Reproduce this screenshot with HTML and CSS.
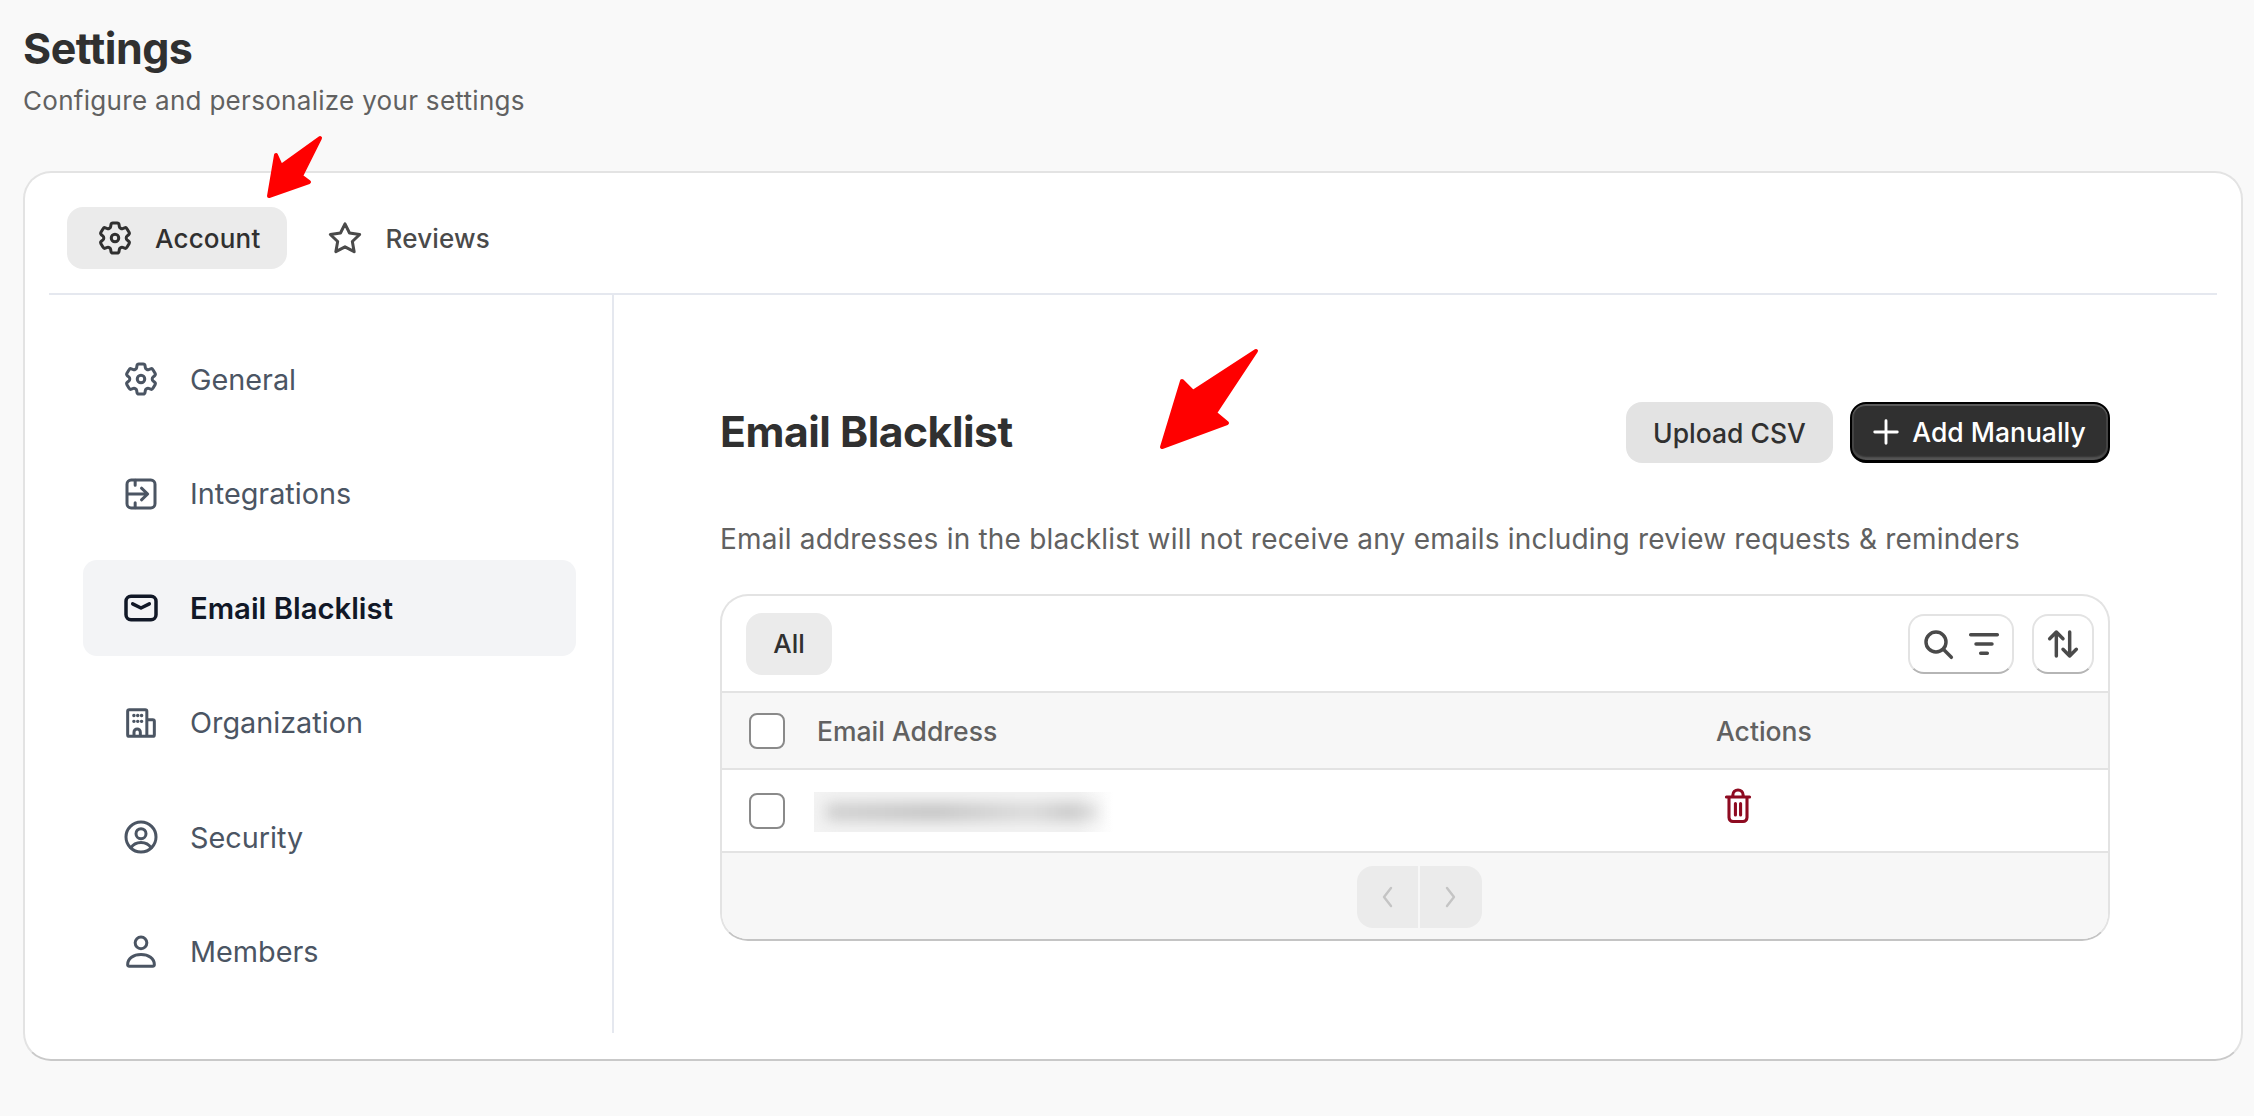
FILE: index.html
```html
<!DOCTYPE html>
<html lang="en">
<head>
    <meta charset="UTF-8">
    <title>Settings</title>
    <link rel="stylesheet" href="styles.css">
</head>
<body>

<svg class="arrow arrow_tab" viewBox="0 0 60 68"><path d="M55 4 L16 32 L11 21 L4 62 L44 48 L36 42 Z"/></svg>
<svg class="arrow arrow_head" viewBox="0 0 104 106"><path d="M98 6 L35 47 L24 36 L4 102 L69 78 L57 68 Z"/></svg>

<div class="page_head">
    <h1 class="page_title">Settings</h1>
    <p class="page_sub">Configure and personalize your settings</p>
</div>

<div class="card">
    <div class="tabs">
        <div class="tab tab_on">
            <svg class="icon" viewBox="0 0 24 24"><path d="M9.594 3.94c.09-.542.56-.94 1.11-.94h2.593c.55 0 1.02.398 1.11.94l.213 1.281c.063.374.313.686.645.87.074.04.147.083.22.127.325.196.72.257 1.075.124l1.217-.456a1.125 1.125 0 0 1 1.37.49l1.296 2.247a1.125 1.125 0 0 1-.26 1.431l-1.003.827c-.293.241-.438.613-.43.992a7.723 7.723 0 0 1 0 .255c-.008.378.137.75.43.991l1.004.827c.424.35.534.955.26 1.43l-1.298 2.247a1.125 1.125 0 0 1-1.369.491l-1.217-.456c-.355-.133-.75-.072-1.076.124a6.47 6.47 0 0 1-.22.128c-.331.183-.581.495-.644.869l-.213 1.281c-.09.543-.56.94-1.11.94h-2.594c-.55 0-1.019-.398-1.11-.94l-.213-1.281c-.062-.374-.312-.686-.644-.87a6.52 6.52 0 0 1-.22-.127c-.325-.196-.72-.257-1.076-.124l-1.217.456a1.125 1.125 0 0 1-1.369-.49l-1.297-2.247a1.125 1.125 0 0 1 .26-1.431l1.004-.827c.292-.24.437-.613.43-.991a6.932 6.932 0 0 1 0-.255c.007-.38-.138-.751-.43-.992l-1.004-.827a1.125 1.125 0 0 1-.26-1.43l1.297-2.247a1.125 1.125 0 0 1 1.37-.491l1.216.456c.356.133.751.072 1.076-.124.072-.044.146-.086.22-.128.332-.183.582-.495.644-.869l.214-1.28Z"/><circle cx="12" cy="12" r="2.25"/></svg>
            <span>Account</span>
        </div>
        <div class="tab">
            <svg class="icon" viewBox="0 0 24 24"><path d="M12 3.500 L14.700 9 L20.800 9.900 L16.400 14.100 L17.500 20.200 L12 17.300 L6.500 20.200 L7.600 14.100 L3.200 9.900 L9.300 9 Z"/></svg>
            <span>Reviews</span>
        </div>
    </div>

    <div class="content">
        <div class="side">
            <div class="nav_item">
                <svg class="icon" viewBox="0 0 24 24"><path d="M9.594 3.94c.09-.542.56-.94 1.11-.94h2.593c.55 0 1.02.398 1.11.94l.213 1.281c.063.374.313.686.645.87.074.04.147.083.22.127.325.196.72.257 1.075.124l1.217-.456a1.125 1.125 0 0 1 1.37.49l1.296 2.247a1.125 1.125 0 0 1-.26 1.431l-1.003.827c-.293.241-.438.613-.43.992a7.723 7.723 0 0 1 0 .255c-.008.378.137.75.43.991l1.004.827c.424.35.534.955.26 1.43l-1.298 2.247a1.125 1.125 0 0 1-1.369.491l-1.217-.456c-.355-.133-.75-.072-1.076.124a6.47 6.47 0 0 1-.22.128c-.331.183-.581.495-.644.869l-.213 1.281c-.09.543-.56.94-1.11.94h-2.594c-.55 0-1.019-.398-1.11-.94l-.213-1.281c-.062-.374-.312-.686-.644-.87a6.52 6.52 0 0 1-.22-.127c-.325-.196-.72-.257-1.076-.124l-1.217.456a1.125 1.125 0 0 1-1.369-.49l-1.297-2.247a1.125 1.125 0 0 1 .26-1.431l1.004-.827c.292-.24.437-.613.43-.991a6.932 6.932 0 0 1 0-.255c.007-.38-.138-.751-.43-.992l-1.004-.827a1.125 1.125 0 0 1-.26-1.43l1.297-2.247a1.125 1.125 0 0 1 1.37-.491l1.216.456c.356.133.751.072 1.076-.124.072-.044.146-.086.22-.128.332-.183.582-.495.644-.869l.214-1.28Z"/><circle cx="12" cy="12" r="2.25"/></svg>
                <span>General</span>
            </div>
            <div class="nav_item">
                <svg class="icon" viewBox="0 0 24 24"><rect x="3.600" y="3.600" width="16.800" height="16.800" rx="2.500"/><path d="M8.500 3.800v3M8.500 17.200v3M4 12h11.500M12.300 8.500 16 12l-3.700 3.500"/></svg>
                <span>Integrations</span>
            </div>
            <div class="nav_item nav_on">
                <svg class="icon" viewBox="0 0 24 24"><rect x="3" y="5" width="18" height="14" rx="3"/><path d="M7 9.500 12 12l5-2.500"/></svg>
                <span>Email Blacklist</span>
            </div>
            <div class="nav_item">
                <svg class="icon" viewBox="0 0 24 24"><path d="M15.500 20H5a1 1 0 0 1-1-1V5a1 1 0 0 1 1-1h9.500a1 1 0 0 1 1 1v15h3.500a1 1 0 0 0 1-1v-8a1 1 0 0 0-1-1h-3.500M7.800 20v-2.500a1.900 1.900 0 0 1 3.800 0V20"/><path class="dots" d="M7.700 7.500h.1M10 7.500h.1M12.300 7.500h.1M7.700 11h.1M10 11h.1M12.300 11h.1"/></svg>
                <span>Organization</span>
            </div>
            <div class="nav_item">
                <svg class="icon" viewBox="0 0 24 24"><circle cx="12" cy="12" r="9"/><circle cx="12" cy="10" r="3"/><path d="M6 18.500c1.300-2.200 3.400-3.200 6-3.200s4.700 1 6 3.200"/></svg>
                <span>Security</span>
            </div>
            <div class="nav_item">
                <svg class="icon" viewBox="0 0 24 24"><circle cx="12" cy="6.500" r="3.500"/><path d="M5 20.500a1 1 0 0 1-1-1c0-3.600 3.400-6 8-6s8 2.400 8 6a1 1 0 0 1-1 1Z"/></svg>
                <span>Members</span>
            </div>
        </div>

        <div class="main">
            <div class="main_head">
                <h2 class="main_title">Email Blacklist</h2>
                <div class="head_btns">
                    <div class="btn btn_grey">Upload CSV</div>
                    <div class="btn btn_dark">
                        <svg class="icon_plus" viewBox="0 0 24 24"><path d="M12 3v18M3 12h18"/></svg>
                        <span>Add Manually</span>
                    </div>
                </div>
            </div>

            <p class="main_desc">Email addresses in the blacklist will not receive any emails including review requests &amp; reminders</p>

            <div class="tbl">
                <div class="tbl_top">
                    <div class="pill">All</div>
                    <div class="tbl_tools">
                        <div class="tool tool_wide">
                            <svg class="tool_icon" viewBox="0 0 24 24"><circle cx="10.500" cy="10.500" r="7.500"/><path d="m16 16 6 6"/></svg>
                            <svg class="tool_icon" viewBox="0 0 24 24"><path d="M2 5h20M6 12h12M9.500 19h5"/></svg>
                        </div>
                        <div class="tool">
                            <svg class="tool_icon" viewBox="0 0 24 24"><path d="M7 21V3M2 8l5-5 5 5M17 3v18M12 16l5 5 5-5"/></svg>
                        </div>
                    </div>
                </div>

                <div class="tbl_row tbl_hd">
                    <div class="check"></div>
                    <div>Email Address</div>
                    <div>Actions</div>
                </div>
                <div class="tbl_row tbl_bd">
                    <div class="check"></div>
                    <div class="smudge"><div class="smudge_bar"></div></div>
                    <svg class="trash" viewBox="0 0 24 28"><path d="M3 7h18M8 7V5.500a4 4 0 0 1 8 0V7M5 7v16a3 3 0 0 0 3 3h8a3 3 0 0 0 3-3V7M10 12v9M14 12v9"/></svg>
                </div>

                <div class="tbl_foot">
                    <div class="pager">
                        <div class="pager_btn"><svg class="chev" viewBox="0 0 12 24"><path d="M10 3 3 12l7 9"/></svg></div>
                        <div class="pager_btn"><svg class="chev" viewBox="0 0 12 24"><path d="m2 3 7 9-7 9"/></svg></div>
                    </div>
                </div>
            </div>
        </div>
    </div>
</div>

</body>
</html>
```

FILE: styles.css
```css
* { box-sizing: border-box; }

body {
    position: relative;
    margin: 0;
    height: 1116px;
    padding: 0 11px 0 23px;
    overflow: hidden;
    background: #f9f9f9;
    color: #303030;
    font-family: Inter, "Noto Sans", sans-serif;
}

h1, h2, p { margin: 0; }

/* red arrows drawn on top of the screenshot */
.arrow {
    position: absolute;
    z-index: 2;
    fill: #ff0000;
    stroke: #ff0000;
    stroke-width: 4;
    stroke-linejoin: round;
}
.arrow_tab { left: 265px; top: 134px; width: 60px; height: 68px; }
.arrow_head { left: 1158px; top: 345px; width: 104px; height: 106px; }

.page_head { height: 171px; padding-top: 23px; }
.page_title { font-size: 43px; line-height: 50px; font-weight: 700; letter-spacing: -0.5px; }
.page_sub { margin-top: 12px; font-size: 26px; line-height: 32px; color: #616161; letter-spacing: 0.3px; }

.card {
    height: 890px;
    padding: 0 24px;
    background: #fff;
    border: 2px solid #e3e3e3;
    border-bottom-color: #c9c9c9;
    border-radius: 28px;
}

/* tabs */
.tabs {
    display: flex;
    gap: 10px;
    height: 122px;
    padding: 34px 0 24px 18px;
    border-bottom: 2px solid #e5e8ef;
}
.tab {
    display: flex;
    align-items: center;
    gap: 20px;
    height: 62px;
    padding: 0 27px 0 28px;
    border-radius: 16px;
    font-size: 26px;
    font-weight: 500;
    letter-spacing: 0.2px;
    color: #4a4a4a;
}
.tab_on { background: #ebebeb; color: #303030; }
.icon {
    flex: none;
    width: 40px;
    height: 40px;
    fill: none;
    stroke: currentColor;
    stroke-width: 1.800;
    stroke-linecap: round;
    stroke-linejoin: round;
}

.content { display: flex; height: 740px; }

/* left menu */
.side {
    flex: none;
    display: flex;
    flex-direction: column;
    gap: 18.500px;
    width: 565px;
    height: 738px;
    padding: 36px 36px 0 34px;
    border-right: 2px solid #e5e8ef;
}
.nav_item {
    flex: none;
    display: flex;
    align-items: center;
    gap: 29px;
    height: 96px;
    padding-left: 38px;
    border-radius: 14px;
    font-size: 28.800px;
    color: #4b5563;
}
.nav_on { background: #f3f4f6; color: #111827; font-size: 29.300px; font-weight: 600; }
.nav_on .icon { stroke-width: 2.100; }
.dots { stroke-width: 2; }

/* right side */
.main { flex: 1; padding: 107px 107px 0 106px; }
.main_head { display: flex; align-items: center; justify-content: space-between; height: 61px; }
.main_title { padding-bottom: 2px; font-size: 42.700px; font-weight: 700; letter-spacing: -0.500px; }
.head_btns { display: flex; gap: 17px; }

.btn {
    display: flex;
    align-items: center;
    justify-content: center;
    height: 61px;
    border-radius: 16px;
    font-size: 26.500px;
    font-weight: 500;
}
.btn_grey { width: 207px; background: #e3e3e3; }
.btn_dark {
    gap: 11px;
    width: 260px;
    padding-right: 3px;
    background: #303030;
    color: #fff;
    border: 2px solid #000;
    border-bottom-width: 3px;
    box-shadow: inset 0 2px 0 #5a5a5a, inset 2px 0 0 #444, inset -2px 0 0 #444, inset 0 -3px 2px #555;
}
.icon_plus { width: 30px; height: 30px; fill: none; stroke: #fff; stroke-width: 2.300; stroke-linecap: round; }

.main_desc { margin-top: 58px; font-size: 28px; line-height: 36px; color: #616161; letter-spacing: 0.2px; }

/* table */
.tbl {
    margin-top: 37px;
    height: 347px;
    background: #fff;
    border: 2px solid #e3e3e3;
    border-bottom-color: #c4c4c4;
    border-radius: 28px;
    overflow: hidden;
}
.tbl_top {
    display: flex;
    align-items: center;
    justify-content: space-between;
    height: 95px;
    padding: 0 14px 0 24px;
}
.pill {
    width: 86px;
    height: 62px;
    line-height: 62px;
    text-align: center;
    background: #ebebeb;
    border-radius: 16px;
    font-size: 26px;
    font-weight: 500;
}
.tbl_tools { display: flex; gap: 18px; }
.tool {
    display: flex;
    align-items: center;
    justify-content: center;
    gap: 14px;
    width: 62px;
    height: 60px;
    background: #fff;
    border: 2px solid #e3e3e3;
    border-bottom-color: #b5b5b5;
    border-radius: 16px;
}
.tool_wide { width: 106px; }
.tool_icon { width: 32px; height: 32px; fill: none; stroke: #4a4a4a; stroke-width: 2.600; stroke-linecap: round; stroke-linejoin: round; }

.tbl_row {
    display: grid;
    grid-template-columns: 36px 867px 1fr;
    column-gap: 32px;
    align-items: center;
    padding-left: 27px;
    border-top: 2px solid #e3e3e3;
}
.tbl_hd { height: 77px; background: #f7f7f7; font-size: 26.500px; font-weight: 500; color: #616161; }
.tbl_bd { height: 83px; }
.check { width: 36px; height: 36px; background: #fff; border: 2px solid #8a8a8a; border-radius: 8px; }

/* blurred address */
.smudge { width: 300px; height: 40px; margin: 2px 0 0 -3px; background: linear-gradient(to right, #f3f3f3 88%, #fff); overflow: hidden; }
.smudge_bar { width: 272px; height: 18px; margin: 11px 0 0 12px; background: linear-gradient(to right, #d0d0d0, #c4c4c4 40%, #dadada 75%, #c8c8c8 90%, #e2e2e2); filter: blur(7px); }

.trash { width: 32px; height: 36px; margin: -10px 0 0 6px; fill: none; stroke: #8e0b21; stroke-width: 2.400; stroke-linecap: round; stroke-linejoin: round; }

.tbl_foot {
    display: flex;
    justify-content: center;
    align-items: flex-start;
    height: 91px;
    padding: 13px 0 0 8px;
    background: #f7f7f7;
    border-top: 2px solid #e3e3e3;
}
.pager { display: flex; gap: 2px; width: 125px; height: 62px; border-radius: 16px; overflow: hidden; }
.pager_btn { flex: 1; display: flex; align-items: center; justify-content: center; background: #ebebeb; }
.chev { width: 12px; height: 24px; fill: none; stroke: #c4c4c4; stroke-width: 2.400; stroke-linecap: round; stroke-linejoin: round; }
```
